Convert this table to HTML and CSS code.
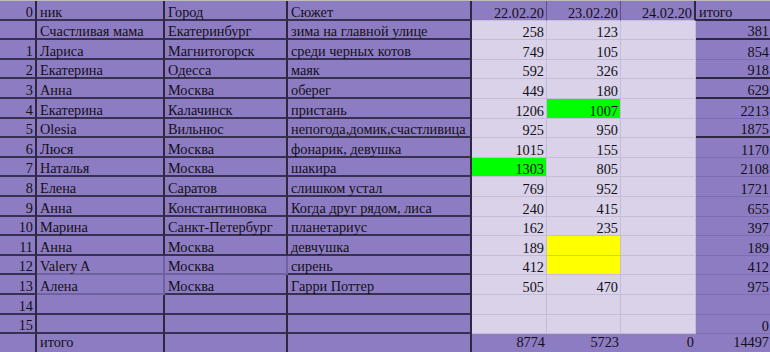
FILE: index.html
```html
<!DOCTYPE html>
<html lang="ru">
<head>
<meta charset="utf-8">
<title>Таблица</title>
<link rel="stylesheet" href="styles.css">
</head>
<body>
<div class="sheet">
  <div class="c r">0</div><div class="c">ник</div><div class="c">Город</div><div class="c">Сюжет</div><div class="c r h">22.02.20</div><div class="c r h">23.02.20</div><div class="c r h hl">24.02.20</div><div class="c t d">итого</div>

  <div class="c r"></div><div class="c">Счастливая мама</div><div class="c">Екатеринбург</div><div class="c">зима на главной улице</div><div class="c r l">258</div><div class="c r l">123</div><div class="c r l"></div><div class="c r t d">381</div>

  <div class="c r">1</div><div class="c">Лариса</div><div class="c">Магнитогорск</div><div class="c">среди черных котов</div><div class="c r l">749</div><div class="c r l">105</div><div class="c r l"></div><div class="c r t">854</div>

  <div class="c r">2</div><div class="c">Екатерина</div><div class="c">Одесса</div><div class="c">маяк</div><div class="c r l">592</div><div class="c r l">326</div><div class="c r l"></div><div class="c r t d">918</div>

  <div class="c r">3</div><div class="c">Анна</div><div class="c">Москва</div><div class="c">оберег</div><div class="c r l">449</div><div class="c r l">180</div><div class="c r l"></div><div class="c r t d">629</div>

  <div class="c r">4</div><div class="c">Екатерина</div><div class="c">Калачинск</div><div class="c">пристань</div><div class="c r l">1206</div><div class="c r l g">1007</div><div class="c r l"></div><div class="c r t">2213</div>

  <div class="c r">5</div><div class="c">Olesia</div><div class="c">Вильнюс</div><div class="c">непогода,домик,счастливица</div><div class="c r l">925</div><div class="c r l">950</div><div class="c r l"></div><div class="c r t d">1875</div>

  <div class="c r">6</div><div class="c">Люся</div><div class="c">Москва</div><div class="c">фонарик, девушка</div><div class="c r l">1015</div><div class="c r l">155</div><div class="c r l"></div><div class="c r t">1170</div>

  <div class="c r">7</div><div class="c">Наталья</div><div class="c">Москва</div><div class="c">шакира</div><div class="c r l g">1303</div><div class="c r l">805</div><div class="c r l"></div><div class="c r t">2108</div>

  <div class="c r">8</div><div class="c">Елена</div><div class="c">Саратов</div><div class="c">слишком устал</div><div class="c r l">769</div><div class="c r l">952</div><div class="c r l"></div><div class="c r t">1721</div>

  <div class="c r">9</div><div class="c">Анна</div><div class="c">Константиновка</div><div class="c">Когда друг рядом, лиса</div><div class="c r l">240</div><div class="c r l">415</div><div class="c r l"></div><div class="c r t">655</div>

  <div class="c r">10</div><div class="c">Марина</div><div class="c">Санкт-Петербург</div><div class="c">планетариус</div><div class="c r l">162</div><div class="c r l">235</div><div class="c r l"></div><div class="c r t">397</div>

  <div class="c r">11</div><div class="c">Анна</div><div class="c">Москва</div><div class="c">девчушка</div><div class="c r l">189</div><div class="c r l yl"></div><div class="c r l"></div><div class="c r t">189</div>

  <div class="c r">12</div><div class="c soft">Valery A</div><div class="c soft">Москва</div><div class="c">сирень</div><div class="c r l">412</div><div class="c r l yl"></div><div class="c r l"></div><div class="c r t">412</div>

  <div class="c r">13</div><div class="c soft">Алена</div><div class="c">Москва</div><div class="c">Гарри Поттер</div><div class="c r l">505</div><div class="c r l">470</div><div class="c r l"></div><div class="c r t">975</div>

  <div class="c r">14</div><div class="c"></div><div class="c"></div><div class="c"></div><div class="c r l"></div><div class="c r l"></div><div class="c r l"></div><div class="c r t"></div>

  <div class="c r">15</div><div class="c"></div><div class="c"></div><div class="c"></div><div class="c r l"></div><div class="c r l"></div><div class="c r l"></div><div class="c r t">0</div>

  <div class="c r z"></div><div class="c z">итого</div><div class="c z"></div><div class="c z"></div><div class="c r f z">8774</div><div class="c r f z">5723</div><div class="c r f z">0</div><div class="c r t z">14497</div>
</div>
</body>
</html>
```
FILE: styles.css
```css
html, body {
  margin: 0;
  padding: 0;
  background: #ffffff;
}

body {
  font-family: "Liberation Serif", "Times New Roman", serif;
  font-size: 14.3px;
  color: #121016;
}

.sheet {
  display: grid;
  grid-template-columns: 37px 128px 123px 184px 75px 74px 75px 75px;
  grid-auto-rows: 19.6px;
  width: 770px;
  border-top: 1px solid #bdbdbd;
  overflow: hidden;
}

.c {
  box-sizing: border-box;
  display: flex;
  align-items: flex-end;
  padding: 0 3px 0 3px;
  line-height: 13px;
  white-space: nowrap;
  background: #8e7cc3;
  border-right: 2px solid #2d2840;
  border-bottom: 2px solid #373050;
}

.r {
  justify-content: flex-end;
  padding-right: 2px;
}

.z {
  align-items: flex-start;
  padding-top: 2px;
}

.soft {
  border-right-color: #6f62a0;
  border-bottom-color: #6f62a0;
}

.h {
  border-right: 1px solid #5d5478;
  border-bottom: 1px solid #c6bedb;
}

.hl {
  border-right: 2px solid #2d2840;
}

.l {
  background: #d9d2e9;
  border-right: 1px solid #c4bcd8;
  border-bottom: 1px solid #c4bcd8;
}

.g {
  background: #00ff00;
}

.yl {
  background: #ffff00;
}

.t {
  border-right: none;
  border-bottom: 1px solid #7d6db3;
}

.t.d {
  border-bottom: 2px solid #2d2840;
}

.f {
  border-right: none;
  border-bottom: none;
}
```
